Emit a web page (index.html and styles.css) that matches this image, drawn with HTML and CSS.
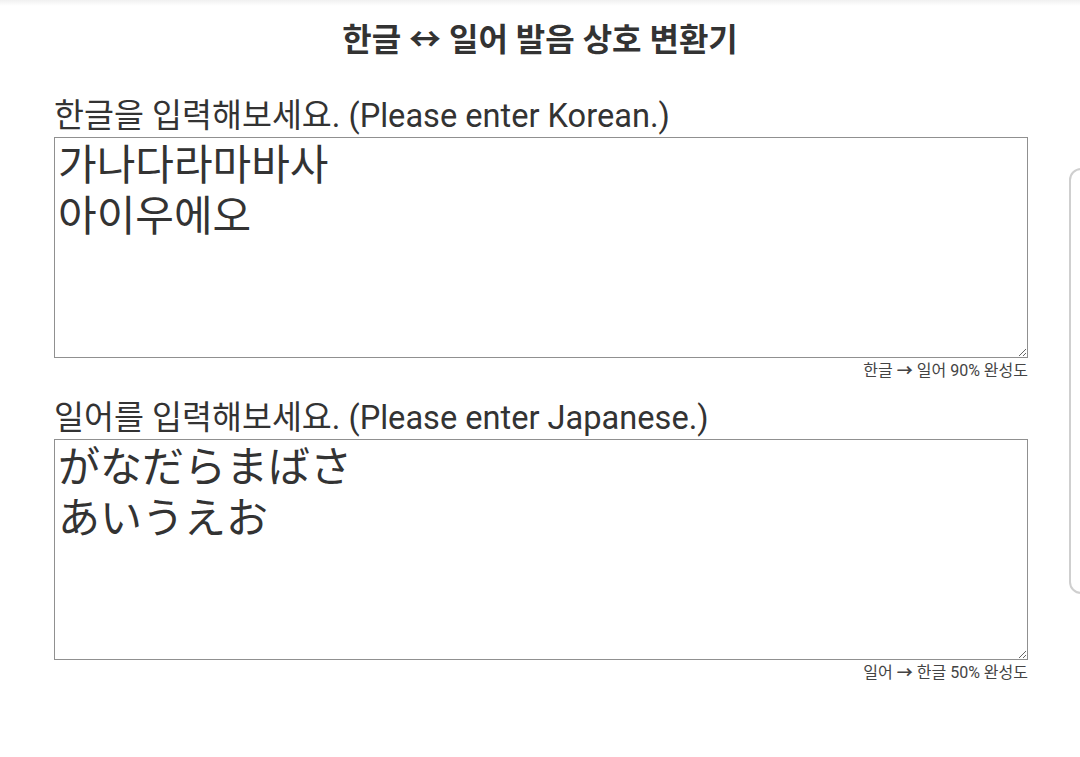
FILE: index.html
```html
<!DOCTYPE html>
<html lang="ko">
<head>
<meta charset="utf-8">
<title>한글 ↔ 일어 발음 상호 변환기</title>
<link rel="stylesheet" href="styles.css">
</head>
<body>
<div class="topshade"></div>
<h1 class="title">한글 ↔ 일어 발음 상호 변환기</h1>
<main class="wrap">
  <section class="group">
    <label class="label" for="ko">한글을 입력해보세요. (Please enter Korean.)</label>
    <textarea id="ko" class="box" lang="ko">가나다라마바사
아이우에오</textarea>
    <div class="note">한글 <span class="arrow">→</span> 일어 90% 완성도</div>
  </section>
  <section class="group">
    <label class="label" for="ja">일어를 입력해보세요. (Please enter Japanese.)</label>
    <textarea id="ja" class="box ja" lang="ja">がなだらまばさ
あいうえお</textarea>
    <div class="note">일어 <span class="arrow">→</span> 한글 50% 완성도</div>
  </section>
</main>
<div class="edge-panel"></div>
</body>
</html>
```
FILE: styles.css
```css
html, body {
  margin: 0;
  padding: 0;
  background: #fff;
}
body {
  font-family: Roboto, "Noto Sans CJK KR", sans-serif;
  color: #333;
  overflow: hidden;
  height: 757px;
}
.topshade {
  position: absolute;
  left: 0;
  top: 0;
  right: 0;
  height: 6px;
  background: linear-gradient(#f0f0f0, rgba(255,255,255,0));
}
.title {
  margin: 0;
  padding-top: 20px;
  height: 80px;
  box-sizing: border-box;
  text-align: center;
  font-size: 32px;
  line-height: 40px;
  font-weight: 700;
  color: #333;
}
.wrap {
  width: 974px;
  margin-left: 54px;
}
.group {
  display: flex;
  flex-direction: column;
  padding-top: 16px;
}
.label {
  font-size: 32.6px;
  line-height: 41px;
  color: #333;
}
.box {
  display: block;
  box-sizing: border-box;
  width: 100%;
  height: 221px;
  margin: 0;
  padding: 2px 3px;
  border: 1px solid #909090;
  font-family: Roboto, "Noto Sans CJK KR", sans-serif;
  font-size: 42px;
  line-height: 51px;
  color: #333;
  resize: both;
  outline: none;
}
.box.ja {
  font-family: Roboto, "Noto Sans CJK JP", sans-serif;
}
.note {
  text-align: right;
  font-size: 16px;
  line-height: 22px;
  padding-top: 2px;
  color: #444;
}
.arrow {
  font-weight: 700;
}
.edge-panel {
  position: absolute;
  left: 1069px;
  top: 168px;
  width: 30px;
  height: 426px;
  box-sizing: border-box;
  border: 2px solid #cfcfcf;
  border-radius: 12px;
  background: #fff;
}
```
